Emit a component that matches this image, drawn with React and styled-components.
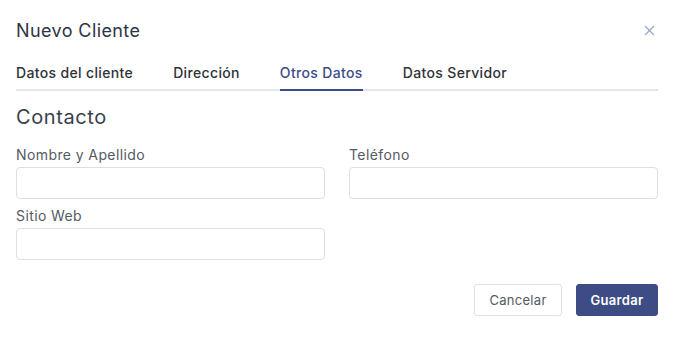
import React, { useState } from "react";
import styled, { createGlobalStyle } from "styled-components";

const GlobalStyle = createGlobalStyle`
  body {
    margin: 0;
    background: #fff;
    font-family: Inter, "Noto Sans", sans-serif;
  }
  * { box-sizing: border-box; }
`;

const Modal = styled.div`
  padding: 0 18px 0 16px;
  width: 676px;
`;

const Header = styled.div`
  height: 60px;
  display: flex;
  align-items: center;
  justify-content: space-between;
  .title {
    font-size: 18px;
    letter-spacing: 0.4px;
    color: #2f3441;
    font-weight: 400;
  }
  .close {
    display: flex;
    margin-right: 3px;
    cursor: pointer;
  }
`;

const TabBar = styled.div`
  display: flex;
  gap: 40px;
  border-bottom: 2px solid #e4e6ef;
`;

const Tab = styled.div`
  font-size: 14px;
  line-height: 20px;
  letter-spacing: 0.35px;
  font-weight: 500;
  padding: 3px 0 6px;
  margin-bottom: -2px;
  color: ${(p) => (p.$active ? "#3d4b8a" : "#2f3238")};
  border-bottom: 2px solid ${(p) => (p.$active ? "#3d4b8a" : "transparent")};
  cursor: pointer;
`;

const SectionTitle = styled.h2`
  margin: 14px 0 0;
  font-size: 20px;
  line-height: 24px;
  letter-spacing: 0.6px;
  font-weight: 400;
  color: #3a3f4c;
`;

const FormGrid = styled.div`
  display: grid;
  grid-template-columns: 1fr 1fr;
  column-gap: 24px;
  row-gap: 7px;
  margin-top: 16px;
`;

const Field = styled.label`
  display: flex;
  flex-direction: column;
  gap: 2px;
  span {
    font-size: 14px;
    line-height: 20px;
    letter-spacing: 0.4px;
    color: #555a64;
  }
  input {
    height: 32px;
    border: 1px solid #dcdfe6;
    border-radius: 4px;
    padding: 0 10px;
    font: inherit;
    outline: none;
  }
`;

const Actions = styled.div`
  display: flex;
  justify-content: flex-end;
  gap: 14px;
  margin-top: 24px;
`;

const Button = styled.button`
  height: 32px;
  width: ${(p) => (p.$primary ? "82px" : "88px")};
  border-radius: 3px;
  font-family: inherit;
  font-size: 13px;
  letter-spacing: 0.3px;
  font-weight: ${(p) => (p.$primary ? 600 : 400)};
  border: 1px solid ${(p) => (p.$primary ? "#3e4c85" : "#dcdfe6")};
  background: ${(p) => (p.$primary ? "#3e4c85" : "#fff")};
  color: ${(p) => (p.$primary ? "#fff" : "#555a64")};
  cursor: pointer;
`;

const tabs = ["Datos del cliente", "Dirección", "Otros Datos", "Datos Servidor"];

const App = () => {
  const [active, setActive] = useState(2);

  return (
    <Modal>
      <GlobalStyle />
      <Header>
        <div className="title">Nuevo Cliente</div>
        <div className="close">
          <svg width="11" height="11" viewBox="0 0 11 11">
            <path d="M1 1L10 10M10 1L1 10" stroke="#9aa4c4" strokeWidth="1.2" />
          </svg>
        </div>
      </Header>
      <TabBar>
        {tabs.map((t, i) => (
          <Tab key={t} $active={i === active} onClick={() => setActive(i)}>
            {t}
          </Tab>
        ))}
      </TabBar>
      <SectionTitle>Contacto</SectionTitle>
      <FormGrid>
        <Field>
          <span>Nombre y Apellido</span>
          <input type="text" />
        </Field>
        <Field>
          <span>Teléfono</span>
          <input type="text" />
        </Field>
        <Field>
          <span>Sitio Web</span>
          <input type="text" />
        </Field>
      </FormGrid>
      <Actions>
        <Button>Cancelar</Button>
        <Button $primary>Guardar</Button>
      </Actions>
    </Modal>
  );
};

export default App;
